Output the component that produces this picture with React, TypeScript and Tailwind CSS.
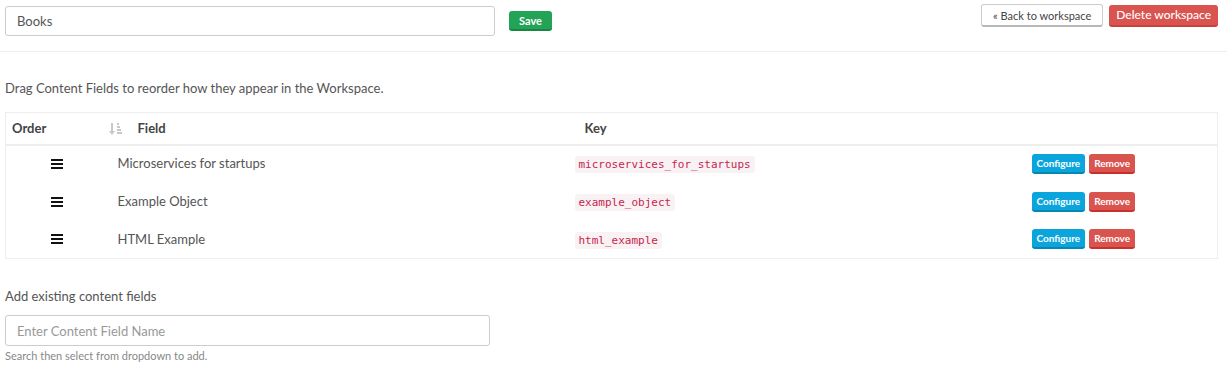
import type { ReactNode } from 'react'

interface FieldRow {
  name: string
  key: string
}

const rows: FieldRow[] = [
  { name: 'Microservices for startups', key: 'microservices_for_startups' },
  { name: 'Example Object', key: 'example_object' },
  { name: 'HTML Example', key: 'html_example' },
]

function DragHandle() {
  return (
    <svg width="12" height="10" viewBox="0 0 12 10" className="inline-block">
      <rect x="0" y="0" width="12" height="2" fill="#111" />
      <rect x="0" y="4" width="12" height="2" fill="#111" />
      <rect x="0" y="8" width="12" height="2" fill="#111" />
    </svg>
  )
}

function SortIcon() {
  return (
    <svg width="13" height="14" viewBox="0 0 13 14" className="inline-block">
      <rect x="2" y="1" width="2" height="9" fill="#c8c8c8" />
      <path d="M0 9 L6 9 L3 13 Z" fill="#c8c8c8" />
      <rect x="8" y="1" width="2" height="2" fill="#c8c8c8" />
      <rect x="8" y="4" width="3" height="2" fill="#c8c8c8" />
      <rect x="8" y="7" width="4" height="2" fill="#c8c8c8" />
      <rect x="8" y="10" width="5" height="2" fill="#c8c8c8" />
    </svg>
  )
}

function SmallButton({ className, children }: { className: string; children: ReactNode }) {
  return (
    <button className={`h-[20px] rounded-[3px] border-b-2 px-[5px] text-[10px] font-bold leading-none text-white ${className}`}>
      {children}
    </button>
  )
}

export default function App() {
  return (
    <div className="min-h-[372px] bg-white text-[13px] text-[#555] [font-family:Lato,'Noto_Sans',sans-serif]">
      <div className="flex items-start justify-between border-b border-[#eee] px-[5px] pb-[15px] pt-[4px]">
        <div className="flex items-center gap-[14px] pt-[2px]">
          <input
            defaultValue="Books"
            className="h-[30px] w-[490px] rounded-[3px] border border-[#ccc] px-[11px] text-[13px] text-[#555] outline-none"
          />
          <button className="h-[20px] rounded-[3px] border-b-2 border-[#1a8445] bg-[#22a355] px-[10px] text-[11px] font-bold leading-none text-white">
            Save
          </button>
        </div>
        <div className="flex items-center gap-[6px] pr-[4px]">
          <button className="h-[23px] rounded-[3px] border border-[#ccc] border-b-2 border-b-[#b8b8b8] bg-white px-[11px] text-[11px] leading-none text-[#444]">
            « Back to workspace
          </button>
          <button className="h-[22px] rounded-[3px] border-b-2 border-[#c9413d] bg-[#d9534f] px-[7px] text-[12px] font-medium leading-none text-white">
            Delete workspace
          </button>
        </div>
      </div>

      <div className="px-[5px] pr-[9px]">
        <p className="mt-[27px] leading-[18px]">Drag Content Fields to reorder how they appear in the Workspace.</p>

        <table className="mt-[15px] w-full table-fixed border border-[#eee] text-left">
          <colgroup>
            <col className="w-[95px]" />
            <col className="w-[465px]" />
            <col className="w-[458px]" />
            <col />
          </colgroup>
          <thead>
            <tr className="h-[32px] border-b-2 border-[#eee] text-[#444]">
              <th className="pl-[6px] font-bold">Order</th>
              <th className="pl-[8px] font-bold">
                <span className="inline-flex items-center gap-[16px] align-middle">
                  <SortIcon />
                  Field
                </span>
              </th>
              <th className="pl-[19px] font-bold">Key</th>
              <th />
            </tr>
          </thead>
          <tbody>
            {rows.map((row) => (
              <tr key={row.key} className="h-[38px]">
                <td className="pl-[45px]">
                  <span className="flex items-center">
                    <DragHandle />
                  </span>
                </td>
                <td className="pl-[17px]">{row.name}</td>
                <td className="pl-[9px]">
                  <code className="rounded-[3px] bg-[#f9f2f4] px-[4px] py-[2px] text-[11px] text-[#c7254e] [font-family:'DejaVu_Sans_Mono',monospace]">
                    {row.key}
                  </code>
                </td>
                <td className="pl-[8px]">
                  <div className="flex gap-[4px]">
                    <SmallButton className="border-[#0786b4] bg-[#0aa5dc]">Configure</SmallButton>
                    <SmallButton className="border-[#c9302c] bg-[#d9534f]">Remove</SmallButton>
                  </div>
                </td>
              </tr>
            ))}
          </tbody>
        </table>

        <p className="mt-[28px] leading-[18px]">Add existing content fields</p>
        <input
          placeholder="Enter Content Field Name"
          className="mt-[10px] h-[31px] w-[485px] rounded-[3px] border border-[#ccc] px-[11px] text-[13px] text-[#555] outline-none placeholder:text-[#999]"
        />
        <p className="mt-[2px] text-[11px] text-[#888]">Search then select from dropdown to add.</p>
      </div>
    </div>
  )
}
